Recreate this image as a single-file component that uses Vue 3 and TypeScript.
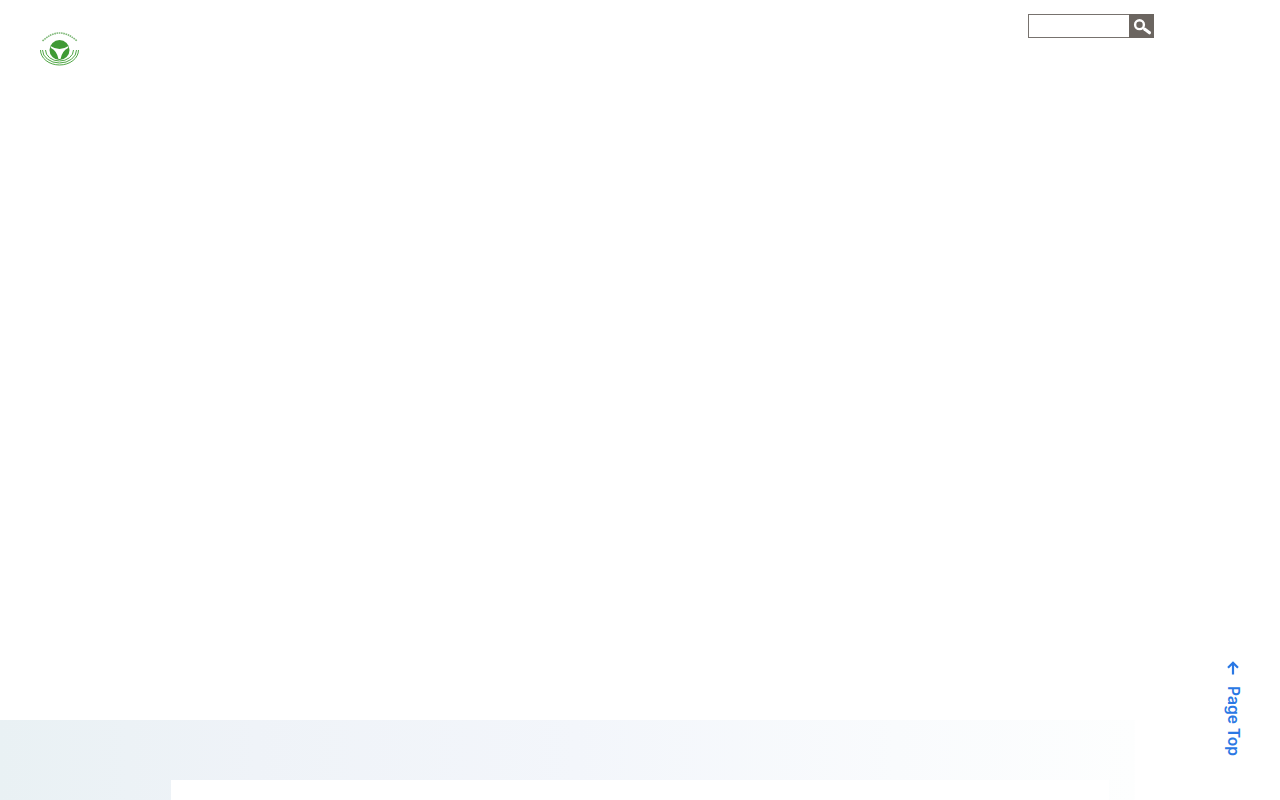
<script setup lang="ts">
const query = "";
</script>

<template>
  <div class="page">
    <header class="site-header">
      <a class="logo" href="#" aria-label="Logo">
        <svg width="40" height="34" viewBox="0 0 40 34">
          <path d="M2.5 9 Q19.5 -7 37 9" fill="none" stroke="#7fb878" stroke-width="1.6" stroke-dasharray="1.6 0.7" />
          <circle cx="19.5" cy="18" r="10" fill="#3f9a35" />
          <path d="M10.5 14 Q19.5 20 28.5 14 L28 16 Q22 19 20.5 27 L18.5 27 Q17 19 11 16 Z" fill="#fff" />
          <path d="M5.5 18 A14 11 0 0 0 33.5 18" fill="none" stroke="#4fa644" stroke-width="1" />
          <path d="M2.5 18 A17 13 0 0 0 36.5 18" fill="none" stroke="#4fa644" stroke-width="1" />
          <path d="M0.5 18 A19 15 0 0 0 38.5 18" fill="none" stroke="#4fa644" stroke-width="1" />
        </svg>
      </a>
      <form class="search" @submit.prevent>
        <input class="search__input" type="text" :value="query" />
        <button class="search__btn" type="submit" aria-label="Search">
          <svg width="25" height="24" viewBox="0 0 25 24">
            <circle cx="10.5" cy="10.7" r="4.4" fill="none" stroke="#fff" stroke-width="2.4" />
            <path d="M15.5 15 L20.5 18.8" stroke="#fff" stroke-width="3" stroke-linecap="round" />
          </svg>
        </button>
      </form>
    </header>

    <main class="content"></main>

    <footer class="site-footer">
      <div class="site-footer__card"></div>
    </footer>

    <a class="page-top" href="#">
      <svg width="14" height="14" viewBox="0 0 14 14">
        <path d="M7 13.5 V2 M2 6.8 L7 1.8 L12 6.8" fill="none" stroke="#2a78e4" stroke-width="2.2" />
      </svg>
      <span class="page-top__label">Page Top</span>
    </a>
  </div>
</template>

<style>
html,
body {
  margin: 0;
  background: #fff;
  overflow: hidden;
}
</style>

<style scoped>
.page {
  position: relative;
  display: flex;
  flex-direction: column;
  height: 800px;
  font-family: Inter, "Liberation Sans", sans-serif;
}
.site-header {
  display: flex;
  justify-content: space-between;
  align-items: flex-start;
  padding: 14px 126px 0 40px;
}
.logo {
  display: block;
  height: 34px;
  margin-top: 18px;
}
.logo svg {
  display: block;
}
.search {
  display: flex;
  height: 24px;
}
.search__input {
  box-sizing: border-box;
  width: 101px;
  height: 24px;
  margin: 0;
  padding: 0 4px;
  border: 1px solid #77726e;
  border-right: 0;
  background: #fff;
  outline: none;
}
.search__btn {
  display: block;
  width: 25px;
  height: 24px;
  padding: 0;
  border: 0;
  background: #6b6560;
}
.search__btn svg {
  display: block;
}
.content {
  flex: 1;
}
.site-footer {
  height: 80px;
  padding: 60px 171px 0;
  box-sizing: border-box;
  background: linear-gradient(90deg, #e9f1f4 0%, #eff3f8 20%, #f3f6fb 45%, #f9fbfd 70%, #fdfefe 88.6%, #fff 88.7%);
}
.site-footer__card {
  height: 20px;
  background: #fff;
}
.page-top {
  position: absolute;
  top: 661px;
  left: 1226px;
  display: flex;
  flex-direction: column;
  align-items: center;
  gap: 11px;
  color: #2a78e4;
  text-decoration: none;
}
.page-top svg {
  display: block;
}
.page-top__label {
  writing-mode: vertical-rl;
  font-size: 15.6px;
  font-weight: 600;
  line-height: 14px;
}
</style>
